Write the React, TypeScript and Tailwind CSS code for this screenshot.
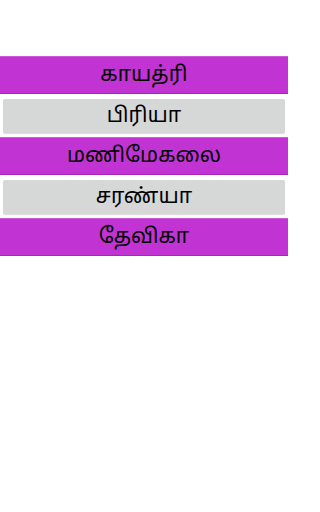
const names = ["காயத்ரி", "பிரியா", "மணிமேகலை", "சரண்யா", "தேவிகா"];

function NameRow({ name, index }: { name: string; index: number }) {
  const purple = index % 2 === 0;
  if (purple) {
    return (
      <div className="flex h-[38px] items-center justify-center border-t border-t-[#cc5ad9] border-b border-b-[#a826b8] bg-[#c134d3] pt-[3px] text-[21px] text-black">
        {name}
      </div>
    );
  }
  return (
    <div className="px-[3px] pt-[5px] pb-[4px]">
      <div className="flex h-[34px] items-center justify-center rounded-[2px] bg-[#d6d7d7] pt-[3px] text-[21px] text-black shadow-[0_1px_1px_rgba(0,0,0,0.15)]">
        {name}
      </div>
    </div>
  );
}

export default function App() {
  return (
    <div
      className="h-[512px] w-[288px] bg-white pt-[56px]"
      style={{ fontFamily: '"Noto Sans Tamil", "Noto Sans", Roboto, sans-serif' }}
    >
      {names.map((n, i) => (
        <NameRow key={n} name={n} index={i} />
      ))}
    </div>
  );
}
